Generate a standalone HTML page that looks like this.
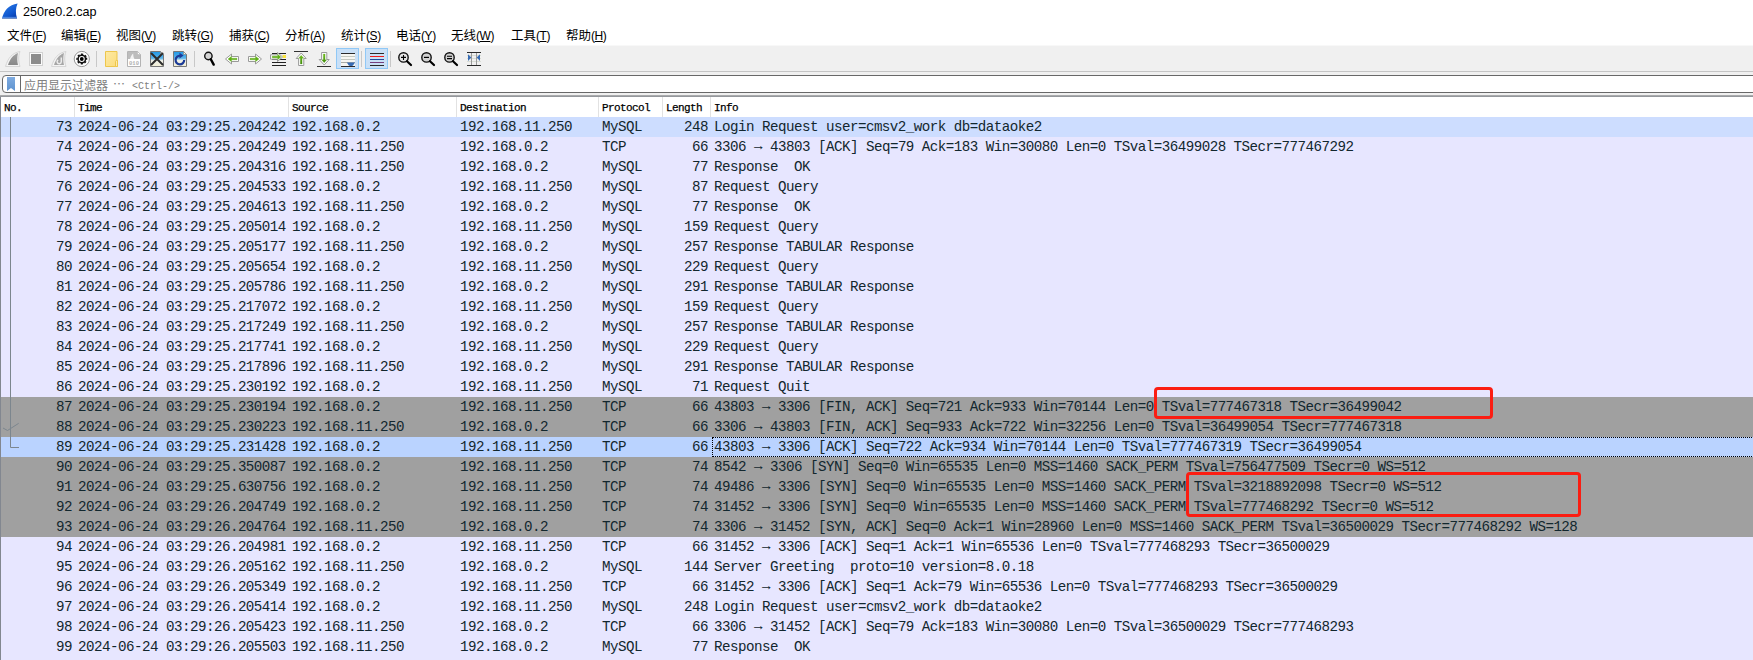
<!DOCTYPE html>
<html><head><meta charset="utf-8"><title>250re0.2.cap</title>
<style>
html,body{margin:0;padding:0;}
body{width:1753px;height:660px;overflow:hidden;background:#fff;position:relative;font-family:"Liberation Sans","Noto Sans CJK SC",sans-serif;}
.abs{position:absolute;}
#title{left:23px;top:4.4px;font-size:12.6px;line-height:16px;color:#000;white-space:nowrap;}
.m{position:absolute;top:27.700px;font-size:12.5px;line-height:17px;color:#000;white-space:nowrap;}
.m u{text-decoration-thickness:1px;text-underline-offset:0.5px;}.m span{font-size:12px;letter-spacing:-0.45px;}
#tb{left:0;top:45px;width:1753px;height:27px;background:#f0f0f0;border-top:1px solid #f8f8f8;box-sizing:border-box;}
#fbar{left:0;top:71px;width:1753px;height:26px;background:#f0f0f0;}
#fline{left:0;top:71px;width:1753px;height:1px;background:#c4c4c4;}
#fbox{left:2px;top:75px;width:1760px;height:18px;box-sizing:border-box;border:1px solid #686868;border-radius:4px;background:#fff;}
#fdiv{left:20px;top:76px;width:1px;height:16px;background:#686868;}
#ph{left:24px;top:79.5px;font-size:12px;line-height:14px;color:#808080;white-space:nowrap;font-family:"Liberation Mono","Noto Sans CJK SC",monospace;}
#ph .l{font-size:10px;position:absolute;left:108px;top:0;}#ph .e{position:absolute;left:89px;top:-3px;font-family:"Noto Sans CJK SC",sans-serif;}
#hline{left:0;top:95px;width:1753px;height:2px;background:linear-gradient(#b4b4b4,#8a8e94);}
#hdr{left:0;top:97px;width:1753px;height:20px;background:#fff;border-left:1px solid #828790;box-sizing:border-box;}
.h{position:absolute;top:101px;font-family:"Liberation Mono",monospace;font-size:11px;letter-spacing:-0.6px;line-height:14px;color:#000;white-space:nowrap;-webkit-text-stroke:0.25px #000;}
.hd{position:absolute;top:97px;width:1px;height:20px;background:#e2e2e2;}
#list{left:0;top:117px;width:1753px;height:543px;overflow:hidden;border-left:1px solid #828790;box-sizing:border-box;background:#e7e6ff;}
.r{position:relative;height:20px;width:1753px;background:#e7e6ff;color:#12272e;font-family:"Liberation Mono",monospace;font-size:14.2px;letter-spacing:-0.52px;line-height:20px;white-space:pre;}
.r.hl{background:#cdddff;}
.r.g{background:#a0a0a0;}
.r.sel{background:#bad3ff;}
.c{position:absolute;top:0;height:20px;}
.no{left:0;width:71px;text-align:right;}
.tm{left:77px;}
.src{left:291px;}
.dst{left:459px;}
.pr{left:601px;}
.ln{left:640px;width:67px;text-align:right;}
.inf{left:713px;}
.a{position:relative;top:-1px;}
.box{position:absolute;border:3px solid #fb1d12;border-radius:4px;box-sizing:border-box;}
</style></head><body>
<svg class="abs" style="left:0;top:0" width="22" height="22" viewBox="0 0 22 22"><defs><linearGradient id="fin" x1="0.2" y1="0" x2="0.9" y2="1"><stop offset="0" stop-color="#2a7ae6"/><stop offset="0.6" stop-color="#1058d0"/><stop offset="1" stop-color="#0838a4"/></linearGradient><linearGradient id="finb" x1="0" y1="0" x2="0" y2="1"><stop offset="0" stop-color="#4c8ae6" stop-opacity="0"/><stop offset="0.6" stop-color="#5c94e8" stop-opacity="0.9"/><stop offset="1" stop-color="#8c9cc0"/></linearGradient></defs><path d="M2 18.700C3.500 11 9 4.600 17.600 3.500C15.600 8 15.300 13 17.100 18.700Z" fill="url(#fin)"/><path d="M2.300 16.200H16.400L17.100 18.700H2Z" fill="url(#finb)"/></svg>
<div id="title" class="abs">250re0.2.cap</div>
<div class="m" style="left:7px">文件<span>(<u>F</u>)</span></div>
<div class="m" style="left:61px">编辑<span>(<u>E</u>)</span></div>
<div class="m" style="left:116px">视图<span>(<u>V</u>)</span></div>
<div class="m" style="left:172px">跳转<span>(<u>G</u>)</span></div>
<div class="m" style="left:229px">捕获<span>(<u>C</u>)</span></div>
<div class="m" style="left:285px">分析<span>(<u>A</u>)</span></div>
<div class="m" style="left:341px">统计<span>(<u>S</u>)</span></div>
<div class="m" style="left:396px">电话<span>(<u>Y</u>)</span></div>
<div class="m" style="left:451px">无线<span>(<u>W</u>)</span></div>
<div class="m" style="left:511px">工具<span>(<u>T</u>)</span></div>
<div class="m" style="left:566px">帮助<span>(<u>H</u>)</span></div>
<div id="tb" class="abs"></div>
<div id="fbar" class="abs"></div>
<div id="fline" class="abs"></div>
<div id="fbox" class="abs"></div>
<div id="fdiv" class="abs"></div>
<svg class="abs" style="left:7px;top:77px" width="8" height="14" viewBox="0 0 8 14"><defs><linearGradient id="bk" x1="0" y1="0" x2="0" y2="1"><stop offset="0" stop-color="#7eabe0"/><stop offset="1" stop-color="#5f93cf"/></linearGradient></defs><path d="M0 0H8V14L4 11L0 14Z" fill="url(#bk)"/></svg>
<div id="ph" class="abs">应用显示过滤器<span class="e" lang="zh-CN">…</span><span class="l">&lt;Ctrl-/&gt;</span></div>
<div id="hline" class="abs"></div>
<div id="hdr" class="abs"></div>
<div class="h" style="left:4px">No.</div>
<div class="h" style="left:78px">Time</div>
<div class="h" style="left:292px">Source</div>
<div class="h" style="left:460px">Destination</div>
<div class="h" style="left:602px">Protocol</div>
<div class="h" style="left:666px">Length</div>
<div class="h" style="left:714px">Info</div>
<div class="hd" style="left:74px"></div>
<div class="hd" style="left:288px"></div>
<div class="hd" style="left:456px"></div>
<div class="hd" style="left:598px"></div>
<div class="hd" style="left:662px"></div>
<div class="hd" style="left:710px"></div>
<div id="list" class="abs">
<div class="r hl"><span class="c no">73</span><span class="c tm">2024-06-24 03:29:25.204242</span><span class="c src">192.168.0.2</span><span class="c dst">192.168.11.250</span><span class="c pr">MySQL</span><span class="c ln">248</span><span class="c inf">Login Request user=cmsv2_work db=dataoke2</span></div>
<div class="r"><span class="c no">74</span><span class="c tm">2024-06-24 03:29:25.204249</span><span class="c src">192.168.11.250</span><span class="c dst">192.168.0.2</span><span class="c pr">TCP</span><span class="c ln">66</span><span class="c inf">3306 <span class="a">→</span> 43803 [ACK] Seq=79 Ack=183 Win=30080 Len=0 TSval=36499028 TSecr=777467292</span></div>
<div class="r"><span class="c no">75</span><span class="c tm">2024-06-24 03:29:25.204316</span><span class="c src">192.168.11.250</span><span class="c dst">192.168.0.2</span><span class="c pr">MySQL</span><span class="c ln">77</span><span class="c inf">Response  OK</span></div>
<div class="r"><span class="c no">76</span><span class="c tm">2024-06-24 03:29:25.204533</span><span class="c src">192.168.0.2</span><span class="c dst">192.168.11.250</span><span class="c pr">MySQL</span><span class="c ln">87</span><span class="c inf">Request Query</span></div>
<div class="r"><span class="c no">77</span><span class="c tm">2024-06-24 03:29:25.204613</span><span class="c src">192.168.11.250</span><span class="c dst">192.168.0.2</span><span class="c pr">MySQL</span><span class="c ln">77</span><span class="c inf">Response  OK</span></div>
<div class="r"><span class="c no">78</span><span class="c tm">2024-06-24 03:29:25.205014</span><span class="c src">192.168.0.2</span><span class="c dst">192.168.11.250</span><span class="c pr">MySQL</span><span class="c ln">159</span><span class="c inf">Request Query</span></div>
<div class="r"><span class="c no">79</span><span class="c tm">2024-06-24 03:29:25.205177</span><span class="c src">192.168.11.250</span><span class="c dst">192.168.0.2</span><span class="c pr">MySQL</span><span class="c ln">257</span><span class="c inf">Response TABULAR Response</span></div>
<div class="r"><span class="c no">80</span><span class="c tm">2024-06-24 03:29:25.205654</span><span class="c src">192.168.0.2</span><span class="c dst">192.168.11.250</span><span class="c pr">MySQL</span><span class="c ln">229</span><span class="c inf">Request Query</span></div>
<div class="r"><span class="c no">81</span><span class="c tm">2024-06-24 03:29:25.205786</span><span class="c src">192.168.11.250</span><span class="c dst">192.168.0.2</span><span class="c pr">MySQL</span><span class="c ln">291</span><span class="c inf">Response TABULAR Response</span></div>
<div class="r"><span class="c no">82</span><span class="c tm">2024-06-24 03:29:25.217072</span><span class="c src">192.168.0.2</span><span class="c dst">192.168.11.250</span><span class="c pr">MySQL</span><span class="c ln">159</span><span class="c inf">Request Query</span></div>
<div class="r"><span class="c no">83</span><span class="c tm">2024-06-24 03:29:25.217249</span><span class="c src">192.168.11.250</span><span class="c dst">192.168.0.2</span><span class="c pr">MySQL</span><span class="c ln">257</span><span class="c inf">Response TABULAR Response</span></div>
<div class="r"><span class="c no">84</span><span class="c tm">2024-06-24 03:29:25.217741</span><span class="c src">192.168.0.2</span><span class="c dst">192.168.11.250</span><span class="c pr">MySQL</span><span class="c ln">229</span><span class="c inf">Request Query</span></div>
<div class="r"><span class="c no">85</span><span class="c tm">2024-06-24 03:29:25.217896</span><span class="c src">192.168.11.250</span><span class="c dst">192.168.0.2</span><span class="c pr">MySQL</span><span class="c ln">291</span><span class="c inf">Response TABULAR Response</span></div>
<div class="r"><span class="c no">86</span><span class="c tm">2024-06-24 03:29:25.230192</span><span class="c src">192.168.0.2</span><span class="c dst">192.168.11.250</span><span class="c pr">MySQL</span><span class="c ln">71</span><span class="c inf">Request Quit</span></div>
<div class="r g"><span class="c no">87</span><span class="c tm">2024-06-24 03:29:25.230194</span><span class="c src">192.168.0.2</span><span class="c dst">192.168.11.250</span><span class="c pr">TCP</span><span class="c ln">66</span><span class="c inf">43803 <span class="a">→</span> 3306 [FIN, ACK] Seq=721 Ack=933 Win=70144 Len=0 TSval=777467318 TSecr=36499042</span></div>
<div class="r g"><span class="c no">88</span><span class="c tm">2024-06-24 03:29:25.230223</span><span class="c src">192.168.11.250</span><span class="c dst">192.168.0.2</span><span class="c pr">TCP</span><span class="c ln">66</span><span class="c inf">3306 <span class="a">→</span> 43803 [FIN, ACK] Seq=933 Ack=722 Win=32256 Len=0 TSval=36499054 TSecr=777467318</span></div>
<div class="r sel"><span class="c no">89</span><span class="c tm">2024-06-24 03:29:25.231428</span><span class="c src">192.168.0.2</span><span class="c dst">192.168.11.250</span><span class="c pr">TCP</span><span class="c ln">66</span><span class="c inf">43803 <span class="a">→</span> 3306 [ACK] Seq=722 Ack=934 Win=70144 Len=0 TSval=777467319 TSecr=36499054</span></div>
<div class="r g"><span class="c no">90</span><span class="c tm">2024-06-24 03:29:25.350087</span><span class="c src">192.168.0.2</span><span class="c dst">192.168.11.250</span><span class="c pr">TCP</span><span class="c ln">74</span><span class="c inf">8542 <span class="a">→</span> 3306 [SYN] Seq=0 Win=65535 Len=0 MSS=1460 SACK_PERM TSval=756477509 TSecr=0 WS=512</span></div>
<div class="r g"><span class="c no">91</span><span class="c tm">2024-06-24 03:29:25.630756</span><span class="c src">192.168.0.2</span><span class="c dst">192.168.11.250</span><span class="c pr">TCP</span><span class="c ln">74</span><span class="c inf">49486 <span class="a">→</span> 3306 [SYN] Seq=0 Win=65535 Len=0 MSS=1460 SACK_PERM TSval=3218892098 TSecr=0 WS=512</span></div>
<div class="r g"><span class="c no">92</span><span class="c tm">2024-06-24 03:29:26.204749</span><span class="c src">192.168.0.2</span><span class="c dst">192.168.11.250</span><span class="c pr">TCP</span><span class="c ln">74</span><span class="c inf">31452 <span class="a">→</span> 3306 [SYN] Seq=0 Win=65535 Len=0 MSS=1460 SACK_PERM TSval=777468292 TSecr=0 WS=512</span></div>
<div class="r g"><span class="c no">93</span><span class="c tm">2024-06-24 03:29:26.204764</span><span class="c src">192.168.11.250</span><span class="c dst">192.168.0.2</span><span class="c pr">TCP</span><span class="c ln">74</span><span class="c inf">3306 <span class="a">→</span> 31452 [SYN, ACK] Seq=0 Ack=1 Win=28960 Len=0 MSS=1460 SACK_PERM TSval=36500029 TSecr=777468292 WS=128</span></div>
<div class="r"><span class="c no">94</span><span class="c tm">2024-06-24 03:29:26.204981</span><span class="c src">192.168.0.2</span><span class="c dst">192.168.11.250</span><span class="c pr">TCP</span><span class="c ln">66</span><span class="c inf">31452 <span class="a">→</span> 3306 [ACK] Seq=1 Ack=1 Win=65536 Len=0 TSval=777468293 TSecr=36500029</span></div>
<div class="r"><span class="c no">95</span><span class="c tm">2024-06-24 03:29:26.205162</span><span class="c src">192.168.11.250</span><span class="c dst">192.168.0.2</span><span class="c pr">MySQL</span><span class="c ln">144</span><span class="c inf">Server Greeting  proto=10 version=8.0.18</span></div>
<div class="r"><span class="c no">96</span><span class="c tm">2024-06-24 03:29:26.205349</span><span class="c src">192.168.0.2</span><span class="c dst">192.168.11.250</span><span class="c pr">TCP</span><span class="c ln">66</span><span class="c inf">31452 <span class="a">→</span> 3306 [ACK] Seq=1 Ack=79 Win=65536 Len=0 TSval=777468293 TSecr=36500029</span></div>
<div class="r"><span class="c no">97</span><span class="c tm">2024-06-24 03:29:26.205414</span><span class="c src">192.168.0.2</span><span class="c dst">192.168.11.250</span><span class="c pr">MySQL</span><span class="c ln">248</span><span class="c inf">Login Request user=cmsv2_work db=dataoke2</span></div>
<div class="r"><span class="c no">98</span><span class="c tm">2024-06-24 03:29:26.205423</span><span class="c src">192.168.11.250</span><span class="c dst">192.168.0.2</span><span class="c pr">TCP</span><span class="c ln">66</span><span class="c inf">3306 <span class="a">→</span> 31452 [ACK] Seq=79 Ack=183 Win=30080 Len=0 TSval=36500029 TSecr=777468293</span></div>
<div class="r"><span class="c no">99</span><span class="c tm">2024-06-24 03:29:26.205503</span><span class="c src">192.168.11.250</span><span class="c dst">192.168.0.2</span><span class="c pr">MySQL</span><span class="c ln">77</span><span class="c inf">Response  OK</span></div>
<div class="r"></div>
</div>
<!--ICONS-->
<svg class="abs" style="left:0;top:45px" width="500" height="27" viewBox="0 45 500 27">
<defs>
<linearGradient id="gfin" x1="0" y1="0" x2="0" y2="1"><stop offset="0" stop-color="#a2a2a2"/><stop offset="1" stop-color="#888"/></linearGradient>
<linearGradient id="gfold" x1="0" y1="0" x2="1" y2="1"><stop offset="0" stop-color="#fde9a4"/><stop offset="1" stop-color="#fbdc7a"/></linearGradient>
<linearGradient id="gsky" x1="0" y1="0" x2="0" y2="1"><stop offset="0" stop-color="#1f97e6"/><stop offset="0.45" stop-color="#5ab4ea"/><stop offset="0.6" stop-color="#eef0e8"/><stop offset="1" stop-color="#f3efd6"/></linearGradient>
<linearGradient id="ggrn" x1="0" y1="0" x2="0" y2="1"><stop offset="0" stop-color="#74c01c"/><stop offset="1" stop-color="#3f8a0c"/></linearGradient>
</defs>
<!-- start capture (grey fin) -->
<path d="M5.5 66.5C8 58 12 53 20 51.5C18 56 18.5 62 20 66.5Z" fill="#f4f4f4" stroke="#d6d6d6" stroke-width="1"/>
<path d="M8 65C10 59 13 55 18 53C17 57 17 61.5 18 65Z" fill="url(#gfin)"/>
<!-- stop -->
<rect x="29.5" y="52.5" width="13" height="13" fill="#fbfbfb" stroke="#d2d2d2"/>
<rect x="31" y="54" width="10" height="10" fill="#8c8c8c"/>
<!-- restart -->
<path d="M51.5 66.5C54 58 58 53 66 51.5C64 56 64.5 62 66 66.5Z" fill="#f4f4f4" stroke="#d6d6d6" stroke-width="1"/>
<path d="M54 65C56 59 59 55 64 53C63 57 63 61.5 64 65Z" fill="#a6a6a6"/>
<path d="M61.300 57.500V61.600A2.100 2.100 0 1 1 58.200 59.800" fill="none" stroke="#ececec" stroke-width="1.500"/>
<!-- options gear -->
<circle cx="81.8" cy="59" r="7.6" fill="#fff" stroke="#8a8a8a" stroke-width="0.9"/>
<circle cx="81.8" cy="59" r="4.800" fill="none" stroke="#111" stroke-width="1.400" stroke-dasharray="2.1 1.670" transform="rotate(-16 81.8 59)"/>
<circle cx="81.8" cy="59" r="3.700" fill="none" stroke="#111" stroke-width="1.500"/>
<circle cx="81.8" cy="59" r="1.900" fill="#000"/>
<!-- sep -->
<rect x="96" y="51" width="1" height="16" fill="#c8c8c8"/>
<!-- folder -->
<path d="M105.5 51.5H117V60.5H117.5V66.5H105.5Z" fill="url(#gfold)" stroke="#edc64c" stroke-width="1"/>
<path d="M115.5 66.5V61.5Q115.5 60.5 116.5 60.5H117.5V66.5Z" fill="#fdeaa8" stroke="#edc64c" stroke-width="1"/>
<!-- save -->
<path d="M127.5 51.5H137.5L140.5 54.5V66.5H127.5Z" fill="#fff" stroke="#b4b4b4"/>
<path d="M128 52H137.3L140 54.7V59H128Z" fill="#bcbcbc"/>
<path d="M130 59C131 56 132 54.5 133.2 53.5C133.2 55.5 133.5 57.5 134.5 59Z" fill="#f2f2f2"/>
<path d="M137.5 51.5V54.5H140.5Z" fill="#fff" stroke="#b4b4b4" stroke-width="0.6"/>
<text x="134" y="64.6" font-family="Liberation Mono, monospace" font-size="5.5" font-weight="bold" fill="#b0b0b0" text-anchor="middle">010</text>
<!-- close -->
<path d="M150.5 51.5H160.5L163.5 54.5V66.5H150.5Z" fill="url(#gsky)" stroke="#787878"/>
<path d="M160.5 51.5V54.5H163.5Z" fill="#fdf6e0" stroke="#787878" stroke-width="0.6"/>
<path d="M151.5 53.5L162.5 64.5M162.5 53.5L151.5 64.5" stroke="#2c2c2c" stroke-width="2" stroke-linecap="round"/>
<!-- reload -->
<path d="M173.5 51.5H183.5L186.5 54.5V66.5H173.5Z" fill="url(#gsky)" stroke="#787878"/>
<path d="M183.5 51.5V54.5H186.5Z" fill="#fdf6e0" stroke="#787878" stroke-width="0.6"/>
<path d="M184.2 60A4.3 4.3 0 1 1 180.5 55.8" fill="none" stroke="#1b3a97" stroke-width="2.2"/>
<path d="M179.5 52.8L183.6 55.6L179.5 58.6Z" fill="#1b3a97"/>
<!-- sep -->
<rect x="194" y="51" width="1" height="16" fill="#c8c8c8"/>
<!-- find -->
<circle cx="208.4" cy="56" r="3.7" fill="#d4d4d4" stroke="#111" stroke-width="1.4"/>
<path d="M210.8 59.2L213.7 64.6" stroke="#000" stroke-width="2.4" stroke-linecap="round"/>
<!-- back -->
<path d="M225.5 59L231.5 54V56.5H238.5V61.5H231.5V64Z" fill="#fff" stroke="#9a9a9a" stroke-width="1" stroke-linejoin="round"/>
<path d="M228 59L231.500 56.300V58.200H237V59.800H231.500V61.700Z" fill="#5fae16" stroke="#5fae16" stroke-width="0.3" stroke-linejoin="round"/>
<!-- forward -->
<path d="M261.5 59L255.5 54V56.5H248.5V61.5H255.5V64Z" fill="#fff" stroke="#9a9a9a" stroke-width="1" stroke-linejoin="round"/>
<path d="M259 59L255.500 56.300V58.200H250V59.800H255.500V61.700Z" fill="#5fae16" stroke="#5fae16" stroke-width="0.3" stroke-linejoin="round"/>
<!-- goto -->
<path d="M272 53.5H286M272 59.5H286M272 62.5H286M272 65.5H286" stroke="#222" stroke-width="1"/>
<rect x="282.5" y="55" width="3.5" height="3" fill="#fbe43c"/>
<path d="M282.5 57L277.5 52.5V54.8H270.5V59.2H277.5V61.5Z" fill="#fff" stroke="#9a9a9a" stroke-width="1" stroke-linejoin="round"/>
<path d="M280.8 57L277.8 54.6V56.2H272.3V57.8H277.8V59.4Z" fill="#5fae16" stroke="#5fae16" stroke-width="0.5" stroke-linejoin="round"/>
<!-- first -->
<path d="M294 51.5H308" stroke="#333" stroke-width="1"/>
<path d="M301.2 53L306.2 58.5H303.8V65.5H298.6V58.5H296.2Z" fill="#fff" stroke="#9a9a9a" stroke-width="1" stroke-linejoin="round"/>
<path d="M301.2 55.300L303.800 58.2H302.100V64H300.300V58.2H298.600Z" fill="url(#ggrn)" stroke="#4f9c12" stroke-width="0.2" stroke-linejoin="round"/>
<!-- last -->
<path d="M317 66.5H331" stroke="#333" stroke-width="1"/>
<path d="M324.2 65L329.2 59.5H326.8V52.5H321.6V59.5H319.2Z" fill="#fff" stroke="#9a9a9a" stroke-width="1" stroke-linejoin="round"/>
<path d="M324.2 62.700L326.800 59.8H325.100V54H323.300V59.8H321.600Z" fill="url(#ggrn)" stroke="#4f9c12" stroke-width="0.2" stroke-linejoin="round"/>
<!-- autoscroll (checked) -->
<rect x="336.5" y="48.5" width="22" height="20" fill="#c9e0f7" stroke="#90c8f6"/>
<rect x="341" y="54" width="14" height="12" fill="#f6f6f2"/><path d="M341 53.5H355" stroke="#2a2a2a"/><path d="M341 56.5H355M341 59.5H355" stroke="#c4c8c0"/><path d="M341 62.5H355" stroke="#a9aca6"/><path d="M341 66.5H355" stroke="#2a2a2a"/>
<path d="M346.8 62.4H355L353 65.6Q350.900 66.600 348.800 65.600Z" fill="#386cb4"/>
<rect x="361" y="51" width="1" height="16" fill="#c8c8c8"/>
<!-- colorize (checked) -->
<rect x="365.500" y="48.5" width="22" height="20" fill="#c9e0f7" stroke="#90c8f6"/>
<path d="M370 53.5H384" stroke="#2a2a2a"/><path d="M370 56.5H384" stroke="#ee1c1c"/><path d="M370 59.5H384" stroke="#204a9c"/><path d="M370 62.5H384" stroke="#75407f"/><path d="M370 65.5H384" stroke="#2a2a2a"/>
<rect x="390" y="51" width="1" height="16" fill="#c8c8c8"/>
<!-- zoom in -->
<circle cx="403.500" cy="57.4" r="4.7" fill="#e6e6e6" stroke="#111" stroke-width="1.4"/>
<path d="M407 61.2L411 65" stroke="#000" stroke-width="2.2" stroke-linecap="round"/>
<path d="M401 57.4H406M403.500 55V59.900" stroke="#000" stroke-width="1.1"/>
<!-- zoom out -->
<circle cx="426.500" cy="57.4" r="4.7" fill="#d2d2d2" stroke="#111" stroke-width="1.4"/>
<path d="M430 61.2L434 65" stroke="#000" stroke-width="2.2" stroke-linecap="round"/>
<path d="M424 57.4H429" stroke="#000" stroke-width="1.2"/>
<!-- zoom reset -->
<circle cx="449.500" cy="57.4" r="4.7" fill="#d2d2d2" stroke="#111" stroke-width="1.4"/>
<path d="M453 61.2L457 65" stroke="#000" stroke-width="2.2" stroke-linecap="round"/>
<path d="M447 56.3H452M447 58.6H452" stroke="#000" stroke-width="1.1"/>
<!-- resize columns -->
<path d="M467 55.5H481M467 58.5H481M467 61.500H481" stroke="#d8dcd4"/>
<path d="M471.500 52V66M476.500 52V66" stroke="#9a9a9a"/>
<path d="M467 52.5H481M467 65.5H481" stroke="#2a2a2a"/>
<path d="M468 54.200L471.300 57.6L468 61Z" fill="#386cb4"/><path d="M480 54.200L476.700 57.6L480 61Z" fill="#386cb4"/>
</svg>

<svg class="abs" style="left:0;top:117px" width="24" height="543" viewBox="0 0 24 543"><path d="M10.5 0V330.5H19" fill="none" stroke="#7c868e" stroke-width="1"/><path d="M3 311L7.5 313.5L18.700 306.3" fill="none" stroke="#7c868e" stroke-width="1"/></svg>
<div class="abs" style="left:712px;top:437px;width:1050px;height:20px;box-sizing:border-box;border:1px dotted #000"></div>
<div class="box" style="left:1153.600px;top:387.3px;width:339.700px;height:32px"></div>
<div class="box" style="left:1185.600px;top:471.5px;width:395.600px;height:45.5px"></div>
</body></html>
